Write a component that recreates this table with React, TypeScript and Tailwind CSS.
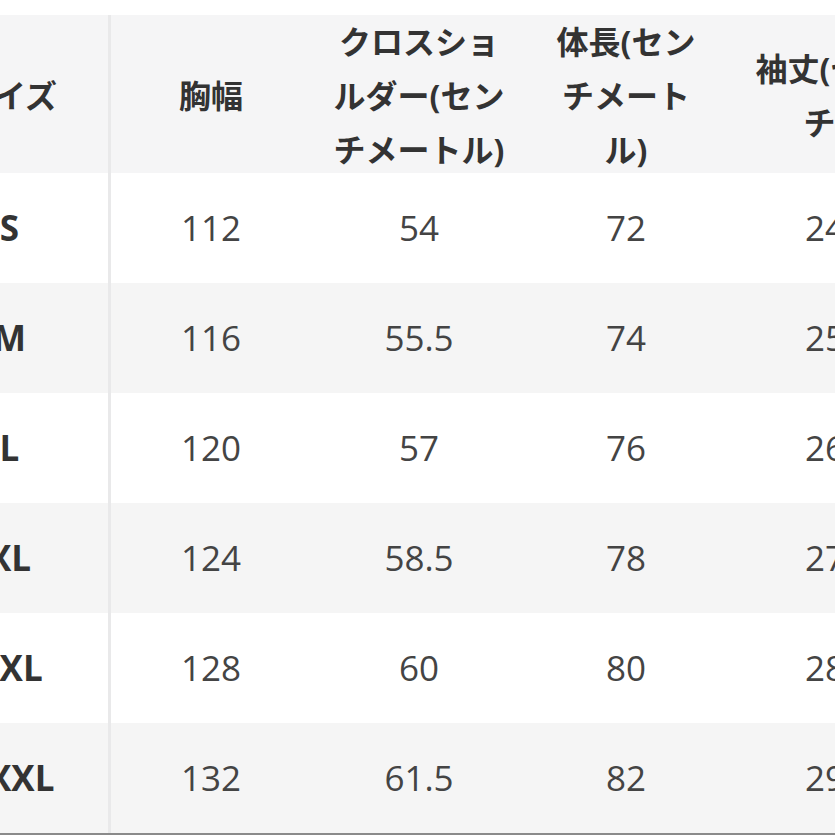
import React from 'react';

const headers: string[][] = [
  ['サイズ'],
  ['胸幅'],
  ['クロスショ', 'ルダー(セン', 'チメートル)'],
  ['体長(セン', 'チメート', 'ル)'],
  ['袖丈(セン', 'チ)'],
];

const rows: string[][] = [
  ['S', '112', '54', '72', '24'],
  ['M', '116', '55.5', '74', '25'],
  ['L', '120', '57', '76', '26'],
  ['XL', '124', '58.5', '78', '27'],
  ['XXL', '128', '60', '80', '28'],
  ['XXXL', '132', '61.5', '82', '29'],
];

const cols = 'grid grid-cols-[200px_200px_216px_198px_200px]';
const font = { fontFamily: '"Open Sans", "Noto Sans CJK JP", sans-serif' };

export default function App() {
  return (
    <div className="w-[835px] h-[835px] overflow-hidden bg-white" style={font}>
      <div className="pt-[15px] ml-[-89px] w-[1014px]">
        <div className={`${cols} h-[158px] bg-[#f5f5f6]`}>
          {headers.map((lines, i) => (
            <div
              key={i}
              className={`flex items-center justify-center text-center text-[32px] leading-[54px] font-bold text-[#333] ${
                i === 0 ? 'border-r-[3px] border-[#e9e9ea]' : ''
              }`}
            >
              <div className="whitespace-nowrap">
                {lines.map((l, j) => (
                  <div key={j}>{l}</div>
                ))}
              </div>
            </div>
          ))}
        </div>
        {rows.map((row, r) => (
          <div key={r} className={`${cols} h-[110px] ${r % 2 === 0 ? 'bg-white' : 'bg-[#f5f5f5]'}`}>
            {row.map((cell, c) => (
              <div
                key={c}
                className={`flex items-center justify-center text-[35px] ${
                  c === 0
                    ? 'border-r-[3px] border-[#e9e9ea] font-bold text-[#333]'
                    : 'font-normal text-[#444]'
                }`}
              >
                {cell}
              </div>
            ))}
          </div>
        ))}
        <div className="h-[2px] bg-[#8a8a8a]" />
      </div>
    </div>
  );
}
